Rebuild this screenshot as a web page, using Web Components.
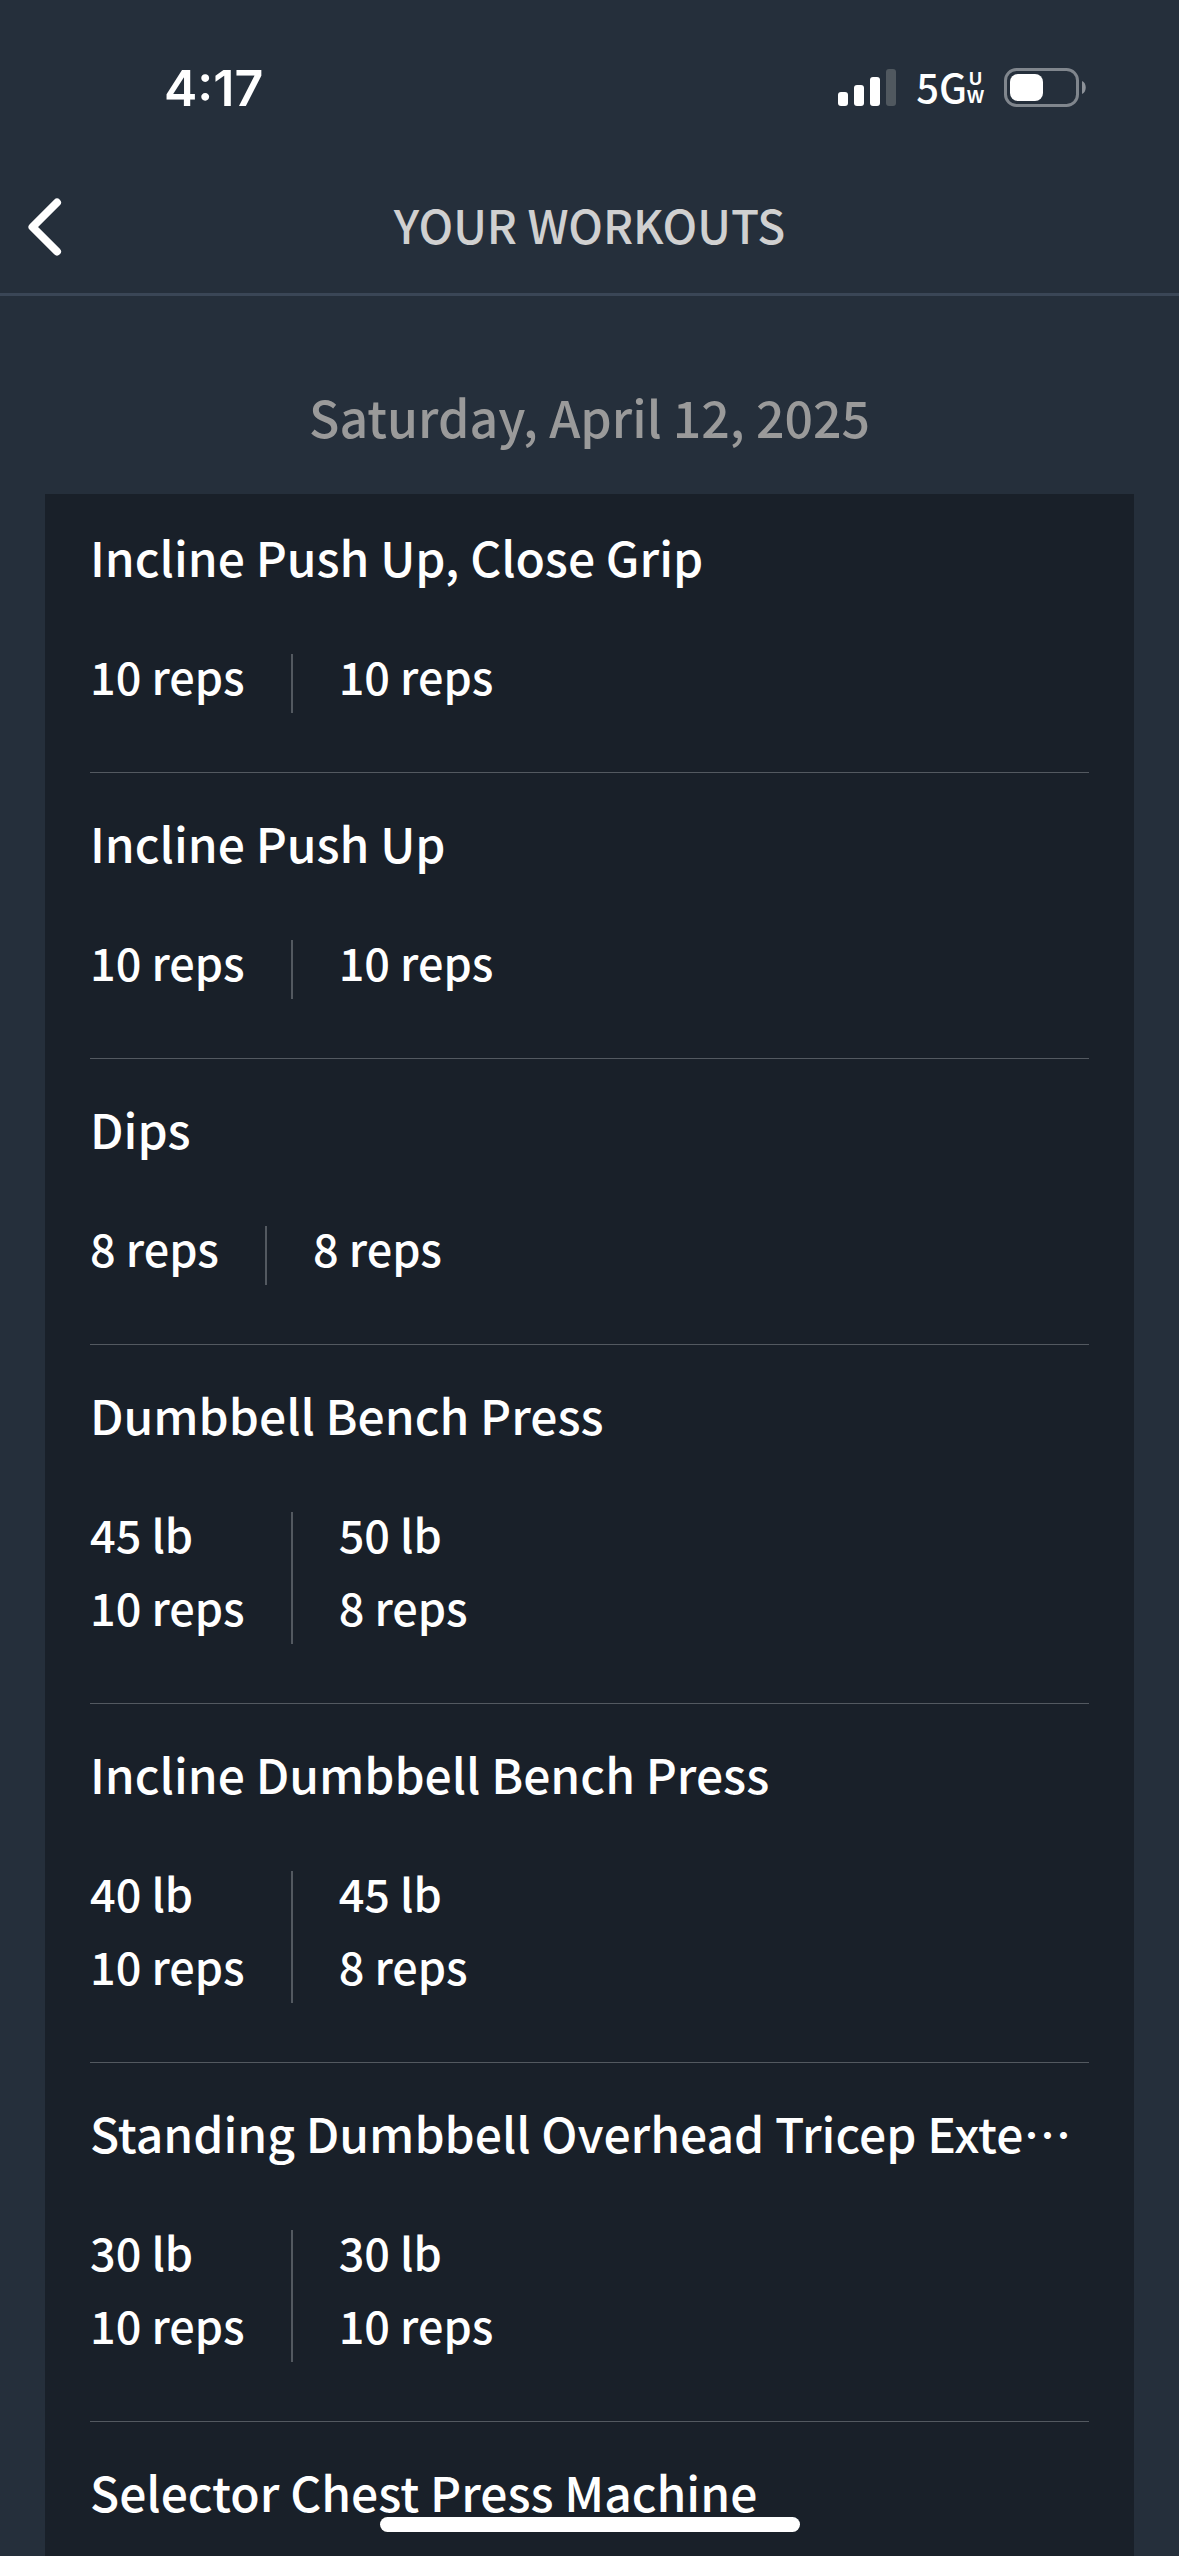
<!DOCTYPE html>
<html lang="en">
<head>
<meta charset="utf-8">
<meta name="viewport" content="width=device-width, initial-scale=1">
<title>Your Workouts</title>
<style>
body{
    margin:0;
    background:#252f3b;
    color:#fff;
    font-family:"Noto Sans CJK SC", "Noto Sans", sans-serif;
    font-weight:500;
}
</style>
</head>
<body>
<workout-app></workout-app>

<script>
class StatusBar extends HTMLElement{

    constructor(){
        super();
        this.shadow = this.attachShadow({mode:'open'});
        this.shadow.innerHTML = `
        <style>
        :host{
            display:flex;
            align-items:center;
            justify-content:space-between;
            height:176px;
            padding:0 92px 0 164px;
            box-sizing:border-box;
        }
        time{
            font:600 50px/60px Inter, sans-serif;
        }
        .icons{
            display:flex;
            align-items:center;
            gap:20px;
        }
        svg{
            display:block;
        }
        .network{
            display:flex;
            align-items:center;
            font-size:40px;
            line-height:36px;
        }
        .generation{
            padding-bottom:4px;
        }
        .band{
            display:grid;
            justify-items:center;
            font:bold 18px/18px "Liberation Sans", sans-serif;
        }
        </style>
        <time>4:17</time>
        <div class="icons">
            <svg width="58" height="38" viewBox="0 0 58 38" fill="#fff" aria-label="Signal">
                <rect x="0" y="23" width="10" height="14" rx="3"/>
                <rect x="16" y="16" width="10" height="21" rx="3"/>
                <rect x="32" y="8" width="10" height="29" rx="3"/>
                <rect x="48" y="0" width="10" height="37" rx="3" fill="#50585f"/>
            </svg>
            <div class="network"><span class="generation">5G</span><span class="band"><span>U</span><span>W</span></span></div>
            <svg width="83" height="40" viewBox="0 0 83 40" aria-label="Battery">
                <rect x="1.5" y="1.5" width="72" height="36" rx="11" fill="none" stroke="#80868d" stroke-width="3"/>
                <rect x="6" y="6" width="33" height="27" rx="8" fill="#fff"/>
                <path d="M78 13c5 2 5 11 0 13z" fill="#8c9198"/>
            </svg>
        </div>
        `;
    }

}

class NavBar extends HTMLElement{

    constructor(){
        super();
        this.shadow = this.attachShadow({mode:'open'});
        this.shadow.innerHTML = `
        <style>
        :host{
            display:grid;
            grid-template-columns:90px 1fr 90px;
            align-items:center;
            height:120px;
            padding-bottom:16px;
            box-sizing:border-box;
            border-bottom:3px solid #3a4656;
        }
        button{
            display:flex;
            padding:0 28px;
            border:0;
            background:none;
        }
        h1{
            margin:0;
            padding-bottom:6px;
            color:#d0d0d0;
            font-size:46px;
            font-weight:500;
            line-height:60px;
            text-align:center;
        }
        </style>
        <button type="button" aria-label="Back">
            <svg width="34" height="58" viewBox="0 0 34 58" fill="none" stroke="#fff" stroke-width="8" stroke-linecap="round" stroke-linejoin="round">
                <path d="M29 4.500L4.500 29L29 53.500"/>
            </svg>
        </button>
        <h1><slot></slot></h1>
        `;
    }

}

class ExerciseRow extends HTMLElement{

    constructor(){
        super();
        this.shadow = this.attachShadow({mode:'open'});
    }

    set data(data){
        this._data = data;
        this.render();
    }

    get data(){
        return this._data;
    }

    render(){
        this.shadow.innerHTML = `
        <style>
        :host{
            display:block;
            padding:40px 0 59px;
            border-bottom:1px solid #535960;
        }
        h3{
            margin:0 0 69px;
            font-family:"Noto Sans CJK TC", "Noto Sans", sans-serif;
            font-size:48px;
            font-weight:500;
            line-height:58px;
            white-space:nowrap;
        }
        .sets{
            display:flex;
        }
        .set{
            display:grid;
            gap:30px;
            padding-bottom:16px;
            font-size:45px;
            line-height:43px;
        }
        .set + .set{
            margin-left:46px;
            padding-left:46px;
            border-left:2px solid #535960;
        }
        </style>
        <h3 lang="zh-Hant"></h3>
        <div class="sets"></div>
        `;
        this.shadow.querySelector('h3').textContent = this.data.name;
        this.renderSets();
    }

    renderSets(){
        let sets = this.shadow.querySelector('.sets');
        this.data.sets.forEach(lines => {
            let set = document.createElement('div');
            set.className = 'set';
            lines.forEach(line => {
                let span = document.createElement('span');
                span.textContent = line;
                set.append(span);
            });
            sets.append(set);
        });
    }

}

class WorkoutDay extends HTMLElement{

    constructor(){
        super();
        this.shadow = this.attachShadow({mode:'open'});
    }

    set data(data){
        this._data = data;
        this.render();
    }

    get data(){
        return this._data;
    }

    render(){
        this.shadow.innerHTML = `
        <style>
        :host{
            display:block;
            padding:80px 45px 0;
        }
        h2{
            margin:0 0 38px;
            color:#9a9a9a;
            font-size:50px;
            font-weight:500;
            line-height:80px;
            text-align:center;
        }
        .card{
            padding:0 45px;
            background:#192029;
        }
        exercise-row:first-child{
            padding-top:33px;
        }
        </style>
        <h2></h2>
        <div class="card"></div>
        `;
        this.shadow.querySelector('h2').textContent = this.data.date;
        let card = this.shadow.querySelector('.card');
        this.data.exercises.forEach(exercise => {
            let row = document.createElement('exercise-row');
            row.data = exercise;
            card.append(row);
        });
    }

}

class HomeIndicator extends HTMLElement{

    constructor(){
        super();
        this.shadow = this.attachShadow({mode:'open'});
        this.shadow.innerHTML = `
        <style>
        :host{
            position:fixed;
            inset:auto 0 24px;
            display:flex;
            justify-content:center;
            pointer-events:none;
        }
        div{
            width:420px;
            height:15px;
            border-radius:8px;
            background:#fff;
        }
        </style>
        <div></div>
        `;
    }

}

class WorkoutApp extends HTMLElement{

    constructor(){
        super();
        this.shadow = this.attachShadow({mode:'open'});
        this.shadow.innerHTML = `
        <style>
        :host{
            display:block;
            height:100vh;
            overflow:hidden;
        }
        </style>
        <status-bar></status-bar>
        <nav-bar>YOUR WORKOUTS</nav-bar>
        <workout-day></workout-day>
        <home-indicator></home-indicator>
        `;
        this.shadow.querySelector('workout-day').data = {
            date:'Saturday, April 12, 2025',
            exercises:[
                {name:'Incline Push Up, Close Grip', sets:[['10 reps'], ['10 reps']]},
                {name:'Incline Push Up', sets:[['10 reps'], ['10 reps']]},
                {name:'Dips', sets:[['8 reps'], ['8 reps']]},
                {name:'Dumbbell Bench Press', sets:[['45 lb', '10 reps'], ['50 lb', '8 reps']]},
                {name:'Incline Dumbbell Bench Press', sets:[['40 lb', '10 reps'], ['45 lb', '8 reps']]},
                {name:'Standing Dumbbell Overhead Tricep Exte⋯', sets:[['30 lb', '10 reps'], ['30 lb', '10 reps']]},
                {name:'Selector Chest Press Machine', sets:[]}
            ]
        };
    }

}

customElements.define('status-bar', StatusBar);
customElements.define('nav-bar', NavBar);
customElements.define('exercise-row', ExerciseRow);
customElements.define('workout-day', WorkoutDay);
customElements.define('home-indicator', HomeIndicator);
customElements.define('workout-app', WorkoutApp);
</script>
</body>
</html>
